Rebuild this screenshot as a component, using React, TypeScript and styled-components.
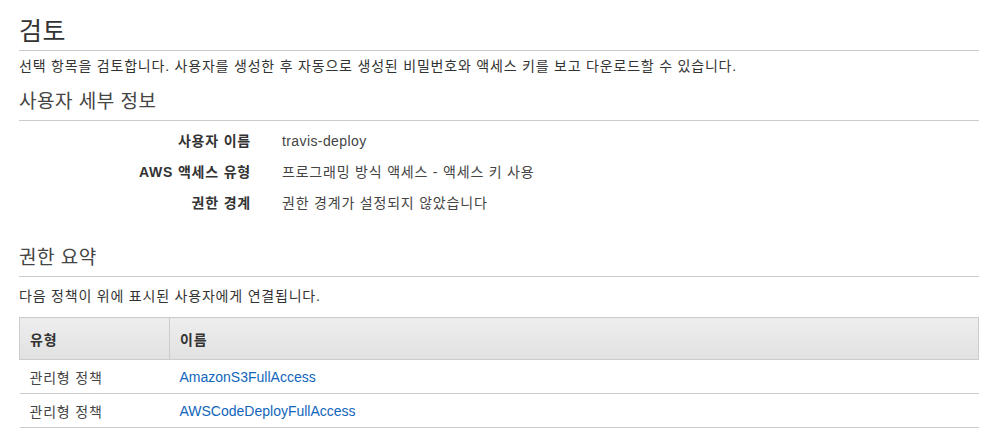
import { Fragment } from "react";
import styled, { createGlobalStyle } from "styled-components";

const GlobalStyle = createGlobalStyle`
  body {
    margin: 0;
    background: #fff;
    font-family: "Liberation Sans", Arial, "Noto Sans CJK KR", sans-serif;
    color: #444;
  }
`;

const Page = styled.div`
  width: 960px;
  padding: 14px 0 0 19px;
  letter-spacing: 0.8px;
`;

const Title = styled.h1`
  margin: 0;
  font-size: 25px;
  font-weight: normal;
  line-height: 34px;
  color: #333;
  padding-bottom: 2px;
  border-bottom: 1px solid #ccc;
  letter-spacing: 0.4px;
`;

const SubTitle = styled.h2<{ $top: number }>`
  margin: ${(p) => p.$top}px 0 0;
  font-size: 19px;
  font-weight: normal;
  line-height: 26px;
  color: #444;
  padding-bottom: 5px;
  border-bottom: 1px solid #ccc;
  letter-spacing: 0.5px;
`;

const Text = styled.p<{ $top: number }>`
  margin: 0;
  font-size: 14px;
  line-height: 20px;
  padding-top: ${(p) => p.$top}px;
  color: #333;
`;

const Details = styled.dl`
  display: grid;
  grid-template-columns: 232px 1fr;
  column-gap: 31px;
  row-gap: 11px;
  margin: 10px 0 0;
  font-size: 14px;
  line-height: 20px;
`;

const Label = styled.dt`
  text-align: right;
  font-weight: bold;
  color: #333;
`;

const Value = styled.dd`
  margin: 0;
  color: #444;
`;

const Latin = styled.span`
  letter-spacing: 0.4px;
`;

const Table = styled.table`
  width: 960px;
  border-collapse: collapse;
  font-size: 14px;
  color: #444;
  margin-top: 11px;
`;

const Th = styled.th<{ $w?: number }>`
  text-align: left;
  font-weight: bold;
  height: 42px;
  padding: 0 10px;
  background: linear-gradient(#eeeeee, #e1e1e1);
  border: 1px solid #ccc;
  width: ${(p) => (p.$w ? `${p.$w}px` : "auto")};
  box-sizing: border-box;
  color: #333;
`;

const Td = styled.td`
  height: 33px;
  padding: 0 10px;
  border-bottom: 1px solid #ccc;
`;

const Link = styled.a`
  color: #1166bb;
  text-decoration: none;
  letter-spacing: 0;
`;

const details: [string, React.ReactNode][] = [
  ["사용자 이름", <Latin>travis-deploy</Latin>],
  ["AWS 액세스 유형", "프로그래밍 방식 액세스 - 액세스 키 사용"],
  ["권한 경계", "권한 경계가 설정되지 않았습니다"],
];

const policies = ["AmazonS3FullAccess", "AWSCodeDeployFullAccess"];

export default function App() {
  return (
    <Page>
      <GlobalStyle />
      <Title>검토</Title>
      <Text $top={5}>
        선택 항목을 검토합니다. 사용자를 생성한 후 자동으로 생성된 비밀번호와 액세스 키를 보고 다운로드할 수 있습니다.
      </Text>
      <SubTitle $top={13}>사용자 세부 정보</SubTitle>
      <Details>
        {details.map(([k, v]) => (
          <Fragment key={k}>
            <Label>{k}</Label>
            <Value>{v}</Value>
          </Fragment>
        ))}
      </Details>
      <SubTitle $top={32}>권한 요약</SubTitle>
      <Text $top={9}>다음 정책이 위에 표시된 사용자에게 연결됩니다.</Text>
      <Table>
        <thead>
          <tr>
            <Th $w={150}>유형</Th>
            <Th>이름</Th>
          </tr>
        </thead>
        <tbody>
          {policies.map((p) => (
            <tr key={p}>
              <Td>관리형 정책</Td>
              <Td>
                <Link href="#">{p}</Link>
              </Td>
            </tr>
          ))}
        </tbody>
      </Table>
    </Page>
  );
}
